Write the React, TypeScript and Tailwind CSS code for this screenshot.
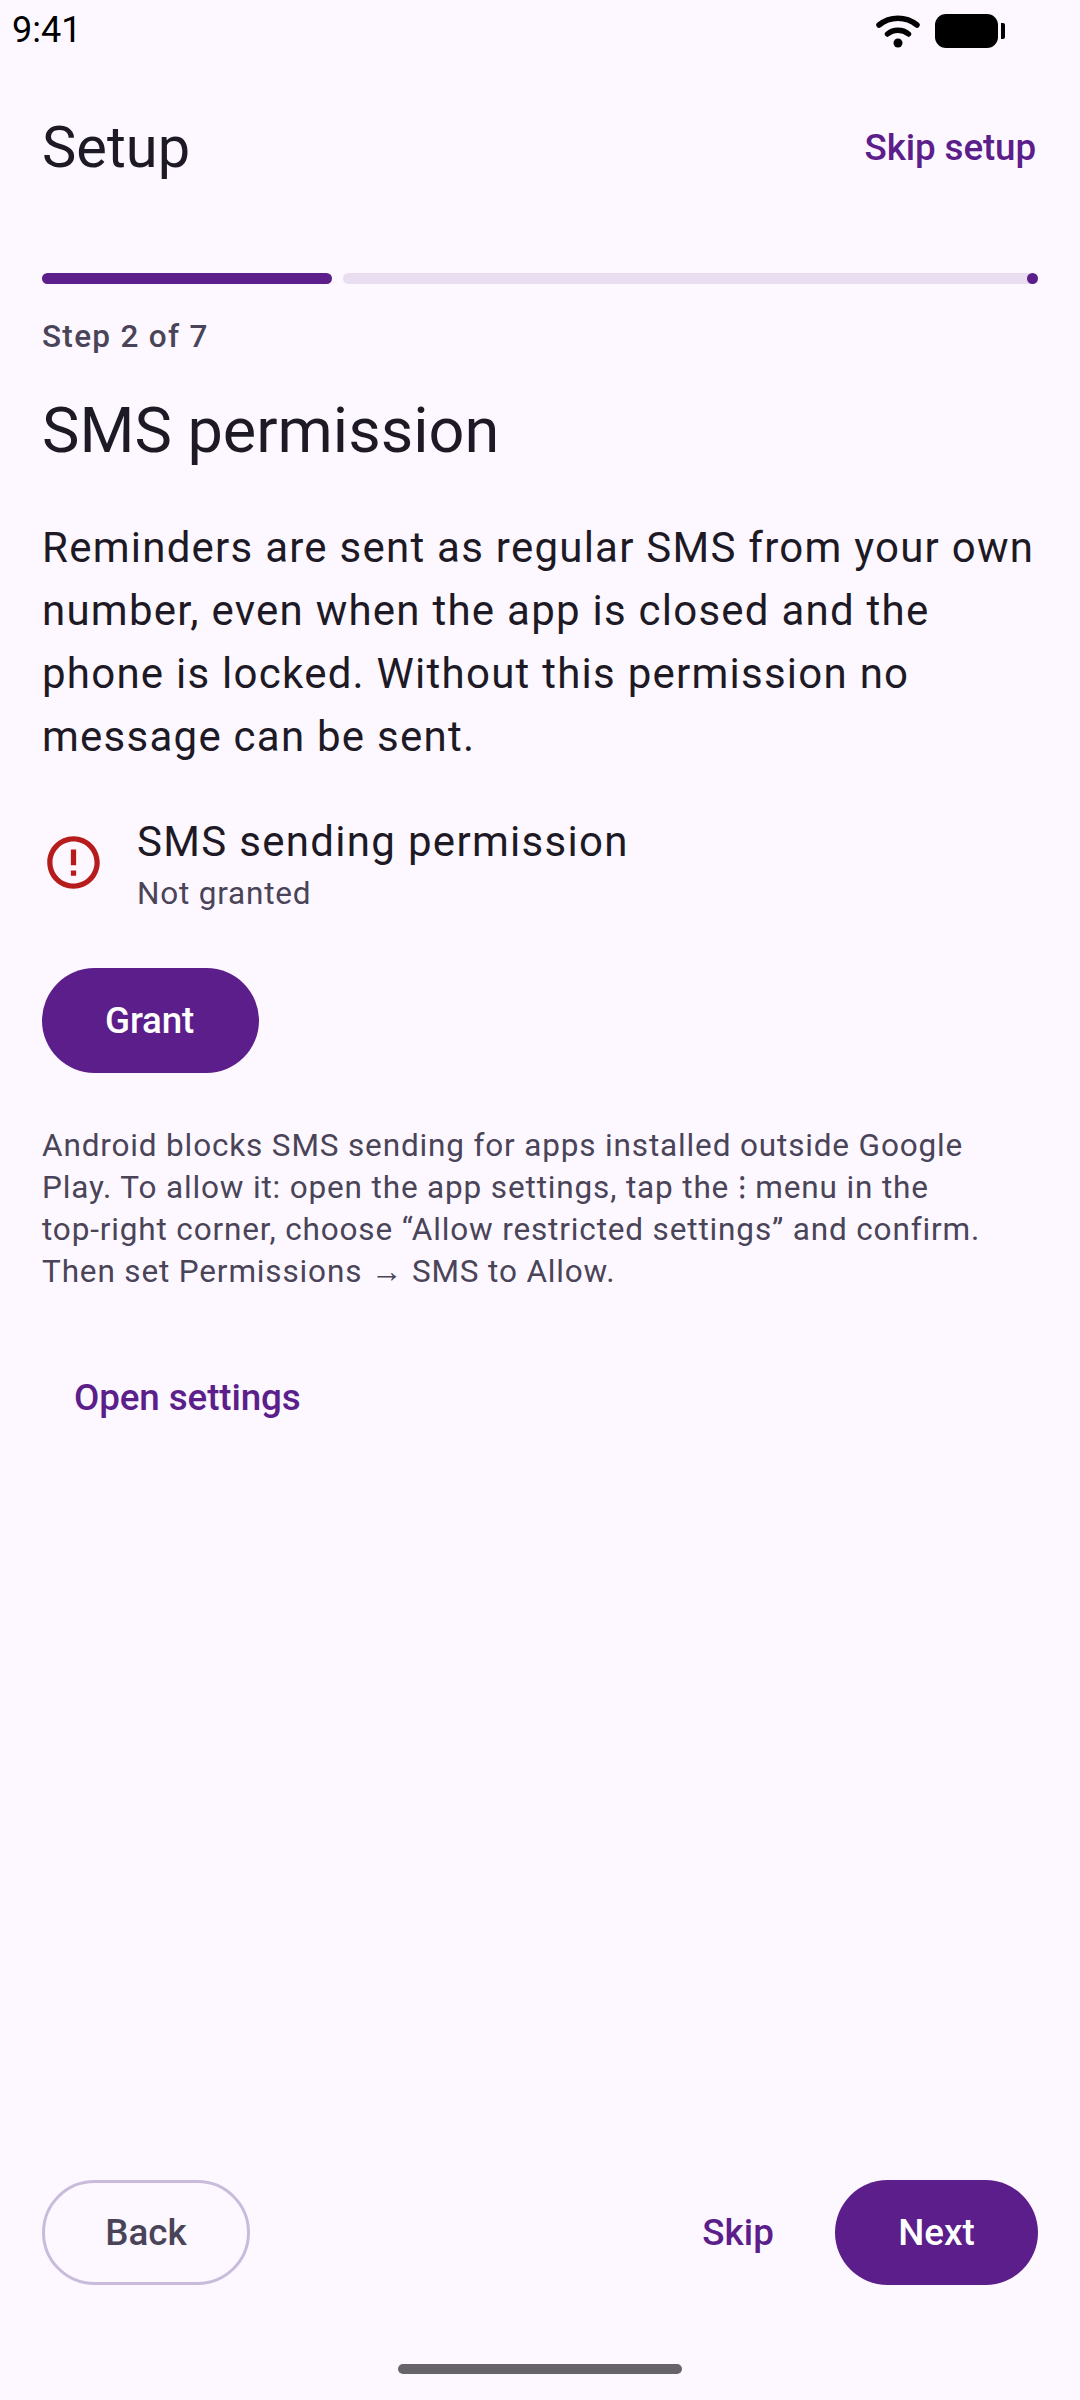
export default function App() {
  return (
    <div className="flex h-[2400px] w-[1080px] flex-col overflow-hidden bg-[#fdf8ff] font-['Roboto',sans-serif]">
      {/* status bar */}
      <div className="flex h-[63px] items-start justify-between pl-[12px] pr-[75px] pt-[6px]">
        <span className="text-[36px] leading-[48px] text-black">9:41</span>
        <div className="flex items-center gap-[14px] pt-[8px]">
          <svg width="46" height="34" viewBox="0 0 46 34" fill="none">
            <path d="M4 11 C15 2 31 2 42 11" stroke="black" strokeWidth="5.5" strokeLinecap="round" />
            <path d="M12.5 20 C18.5 15 27.5 15 33.5 20" stroke="black" strokeWidth="5.5" strokeLinecap="round" />
            <circle cx="23" cy="29" r="4.5" fill="black" />
          </svg>
          <div className="flex items-center gap-[3px]">
            <div className="h-[34px] w-[63px] rounded-[11px] bg-black" />
            <div className="h-[16px] w-[4px] rounded-r-[2px] bg-black" />
          </div>
        </div>
      </div>

      {/* header */}
      <div className="mt-[42px] flex h-[84px] items-center justify-between pl-[42px] pr-[44px]">
        <h1 className="text-[57.75px] leading-[84px] font-normal text-[#1d1a26]">Setup</h1>
        <button className="pt-[2px] text-[36.75px] leading-[52px] font-medium tracking-[-0.1px] text-[#5b1e8a]">Skip setup</button>
      </div>

      {/* progress */}
      <div className="mt-[84px] flex h-[11px] gap-[11px] px-[42px]">
        <div className="w-[290px] rounded-full bg-[#5b1e8a]" />
        <div className="flex flex-1 justify-end rounded-full bg-[#e9deef]">
          <div className="h-[11px] w-[11px] rounded-full bg-[#5b1e8a]" />
        </div>
      </div>

      <main className="flex flex-1 flex-col px-[42px]">
        <p className="mt-[32px] text-[31.5px] leading-[42px] font-medium tracking-[1.3px] text-[#4a4458]">Step 2 of 7</p>
        <h2 className="mt-[31px] text-[63px] leading-[84px] font-normal text-[#1d1a26]">SMS permission</h2>
        <p className="mt-[43px] text-[42px] leading-[63px] tracking-[1.25px] text-[#1d1a26]">
          Reminders are sent as regular SMS from your own number, even when the app is closed and the phone is locked. Without this permission no message can be sent.
        </p>

        <div className="mt-[42px] flex items-center gap-[32px]">
          <svg width="63" height="63" viewBox="0 0 24 24" fill="#b71c1c" className="shrink-0">
            <path d="M11 15h2v2h-2zm0-8h2v6h-2zm.99-5C6.47 2 2 6.48 2 12s4.47 10 9.99 10C17.52 22 22 17.52 22 12S17.52 2 11.99 2zM12 20c-4.42 0-8-3.58-8-8s3.58-8 8-8 8 3.58 8 8-3.58 8-8 8z" />
          </svg>
          <div>
            <p className="text-[42px] leading-[63px] tracking-[1.31px] text-[#1d1a26]">SMS sending permission</p>
            <p className="text-[31.5px] leading-[42px] tracking-[0.8px] text-[#4a4458]">Not granted</p>
          </div>
        </div>

        <button className="mt-[53px] h-[105px] w-[217px] rounded-full bg-[#5b1e8a] pr-[2px] text-[36.75px] font-medium tracking-[-0.2px] text-white">Grant</button>

        <p className="mt-[52px] w-[996px] text-[31.5px] leading-[42px] tracking-[0.85px] text-[#4a4458]">
          Android blocks SMS sending for apps installed outside Google Play. To allow it: open the app settings, tap the ⁝ menu in the<br />top-right corner, choose “Allow restricted settings” and confirm. Then set Permissions → SMS to Allow.
        </p>

        <button className="mt-[79px] self-start pl-[32px] text-left text-[36.75px] leading-[52px] font-medium tracking-[-0.1px] text-[#5b1e8a]">Open settings</button>
      </main>

      {/* footer buttons */}
      <div className="flex items-center px-[42px]">
        <button className="h-[105px] w-[208px] rounded-full border-[3px] border-[#c9bbdb] text-[36.75px] font-medium text-[#4a4458]">Back</button>
        <div className="flex-1" />
        <button className="mr-[61px] text-[36.75px] font-medium tracking-[0.1px] text-[#5b1e8a]">Skip</button>
        <button className="h-[105px] w-[203px] rounded-full bg-[#5b1e8a] text-[36.75px] font-medium text-white">Next</button>
      </div>

      {/* home indicator */}
      <div className="flex justify-center pt-[79px] pb-[26px]">
        <div className="h-[10px] w-[284px] rounded-full bg-[#666468]" />
      </div>
    </div>
  );
}
